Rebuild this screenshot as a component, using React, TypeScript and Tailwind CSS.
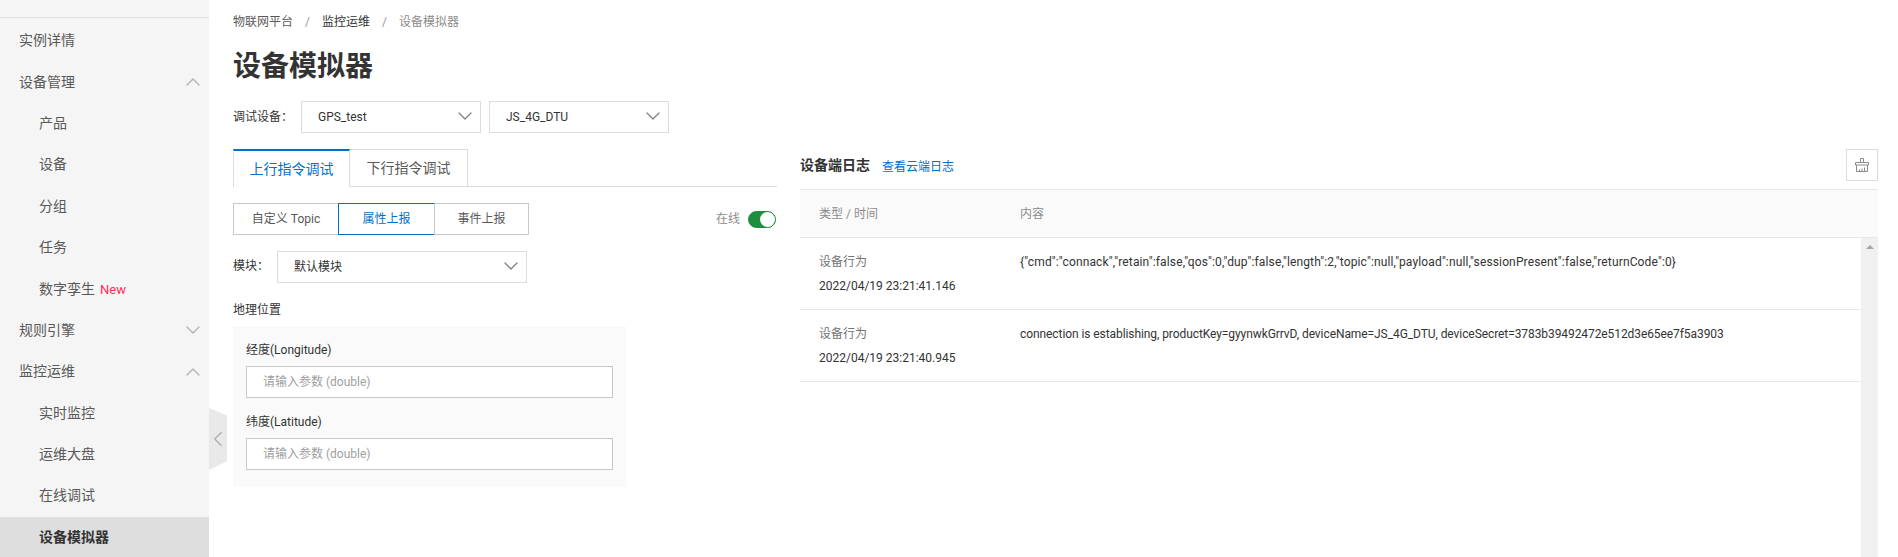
import React from "react";
import { ChevronDown, ChevronUp, ChevronLeft } from "lucide-react";

const font = "font-['Roboto','Noto_Sans_CJK_SC',sans-serif]";

function NavItem({ label, sub, open, active, badge }: { label: string; sub?: boolean; open?: boolean | null; active?: boolean; badge?: string }) {
  return (
    <div className={`flex h-[41.4px] shrink-0 items-center justify-between pr-[4px] text-[14px] ${sub ? "pl-[39px]" : "pl-[19px]"} ${active ? "bg-[#dedede] font-bold text-[#333333]" : "text-[#595959]"}`}>
      <span>
        {label}
        {badge && <span className="ml-[5px] text-[13px] text-[#ff2d55]">{badge}</span>}
      </span>
      {open === true && <ChevronUp className="h-6 w-6 text-[#b3b3b3]" strokeWidth={1.4} />}
      {open === false && <ChevronDown className="h-6 w-6 text-[#b3b3b3]" strokeWidth={1.4} />}
    </div>
  );
}

function Select({ value, className }: { value: string; className: string }) {
  return (
    <div className={`flex h-[32px] items-center justify-between border border-[#dcdcdc] bg-white pl-[16px] pr-[3px] text-[12px] text-[#333333] ${className}`}>
      <span>{value}</span>
      <ChevronDown className="h-6 w-6 -translate-y-[1px] text-[#808080]" strokeWidth={1.3} />
    </div>
  );
}

function Field({ label }: { label: string }) {
  return (
    <div>
      <div className="mb-[7px] h-[17px] text-[12px] leading-[17px] text-[#333333]">{label}</div>
      <div className="flex h-[32px] items-center border border-[#c8c8c8] bg-white pl-[16px] text-[12px] text-[#a0a0a0]">请输入参数 (double)</div>
    </div>
  );
}

function LogRow({ time, content, contentClass }: { time: string; content: string; contentClass: string }) {
  return (
    <div className="flex h-[72px] border-b border-[#e8e8e8] pt-[12px] text-[12px] leading-[24px]">
      <div className="w-[220px] pl-[19px]">
        <div className="text-[#737373]">设备行为</div>
        <div className="text-[#333333]">{time}</div>
      </div>
      <div className={`text-[#333333] ${contentClass}`}>{content}</div>
    </div>
  );
}

export default function App() {
  return (
    <div className={`relative flex h-[557px] overflow-hidden bg-white ${font}`}>
      <aside className="flex w-[209px] shrink-0 flex-col bg-[#f5f5f5] pt-[17px]">
        <div className="mb-[2px] border-t border-[#e0e0e0]" />
        <NavItem label="实例详情" />
        <NavItem label="设备管理" open={true} />
        <NavItem label="产品" sub />
        <NavItem label="设备" sub />
        <NavItem label="分组" sub />
        <NavItem label="任务" sub />
        <NavItem label="数字孪生" sub badge="New" />
        <NavItem label="规则引擎" open={false} />
        <NavItem label="监控运维" open={true} />
        <NavItem label="实时监控" sub />
        <NavItem label="运维大盘" sub />
        <NavItem label="在线调试" sub />
        <NavItem label="设备模拟器" sub active />
      </aside>

      <div className="absolute left-[209px] top-[408px] flex h-[62px] w-[18px] items-center justify-center bg-[#e9e9e9] [clip-path:polygon(0_0,100%_7.5px,100%_53.5px,0_100%)]">
        <ChevronLeft className="h-[26px] w-[26px] shrink-0 text-[#b0b0b0]" strokeWidth={1.3} />
      </div>

      <main className="flex min-w-0 flex-1 flex-col pl-[24px] pr-[20px]">
        <nav className="mt-[14px] flex h-[17px] items-center text-[12px] leading-[17px] text-[#555555]">
          <span className="text-[#595959]">物联网平台</span>
          <span className="mx-[12px] text-[#999999]">/</span>
          <span className="text-[#333333]">监控运维</span>
          <span className="mx-[12px] text-[#999999]">/</span>
          <span className="text-[#8c8c8c]">设备模拟器</span>
        </nav>
        <h1 className="mt-[18px] h-[36px] text-[28px] font-bold leading-[36px] text-[#333333]">设备模拟器</h1>
        <div className="mt-[16px] flex items-center">
          <span className="w-[68px] text-[12px] text-[#333333]">调试设备：</span>
          <Select value="GPS_test" className="w-[180px]" />
          <Select value="JS_4G_DTU" className="ml-[8px] w-[180px]" />
        </div>

        <div className="mt-[16px] flex gap-[23px]">
          <section className="w-[544px] shrink-0">
            <div className="flex h-[38px] border-b border-[#dcdcdc] text-[14px]">
              <div className="relative flex h-[38px] w-[117px] items-center justify-center border-r border-l border-t-2 border-[#dcdcdc] border-t-[#0070cc] bg-white text-[#0070cc]">上行指令调试</div>
              <div className="flex h-[37px] w-[118px] items-center justify-center border-r border-t border-[#dcdcdc] text-[#595959]">下行指令调试</div>
            </div>
            <div className="mt-[16px] flex items-center justify-between">
              <div className="flex h-[32px] text-[12px]">
                <div className="flex w-[106px] items-center justify-center border border-[#c8c8c8] text-[#595959]">自定义 Topic</div>
                <div className="-ml-px flex w-[97px] items-center justify-center border border-[#0070cc] text-[#0070cc]">属性上报</div>
                <div className="-ml-px flex w-[95px] items-center justify-center border border-[#c8c8c8] text-[#595959]">事件上报</div>
              </div>
              <div className="flex items-center pr-[1px]">
                <span className="text-[12px] text-[#8c8c8c]">在线</span>
                <span className="ml-[8px] flex h-[17px] w-[28px] items-center justify-end rounded-full border border-[#1e8e3e] bg-[#1e8e3e]">
                  <span className="h-[15px] w-[15px] rounded-full bg-white" />
                </span>
              </div>
            </div>
            <div className="mt-[16px] flex items-center">
              <span className="w-[44px] -translate-y-[1px] text-[12px] text-[#333333]">模块：</span>
              <Select value="默认模块" className="w-[250px]" />
            </div>
            <div className="mt-[19px] h-[17px] text-[12px] leading-[17px] text-[#333333]">地理位置</div>
            <div className="mt-[7px] flex w-[393px] flex-col gap-[16px] bg-[#fafafa] px-[13px] pb-[17px] pt-[16px]">
              <Field label="经度(Longitude)" />
              <Field label="纬度(Latitude)" />
            </div>
          </section>

          <section className="min-w-0 flex-1">
            <div className="flex h-[40px] items-start justify-between">
              <div className="mt-[6px] flex items-center">
                <span className="text-[14px] font-bold text-[#333333]">设备端日志</span>
                <span className="ml-[12px] translate-y-[1px] text-[12px] text-[#0070cc]">查看云端日志</span>
              </div>
              <div className="flex h-[32px] w-[32px] items-center justify-center border border-[#dcdcdc]">
                <svg width="16" height="16" viewBox="0 0 16 16" fill="none" stroke="#8a8a8a" strokeWidth="1">
                  <path d="M6.5 5.5V1.5h3v4" />
                  <path d="M1.5 5.5h13v2.5h-13z" />
                  <path d="M2.5 8v6.5h11V8" />
                  <path d="M5.5 14.5v-2M8 14.5v-3M10.5 14.5v-4" />
                </svg>
              </div>
            </div>
            <div className="flex h-[49px] items-center border-y border-[#e8e8e8] bg-[#fafafa] text-[12px] text-[#8c8c8c]">
              <div className="w-[220px] pl-[19px]">类型 / 时间</div>
              <div>内容</div>
            </div>
            <div className="relative h-[400px]">
              <LogRow time="2022/04/19 23:21:41.146" contentClass="tracking-[0.14px]" content={'{"cmd":"connack","retain":false,"qos":0,"dup":false,"length":2,"topic":null,"payload":null,"sessionPresent":false,"returnCode":0}'} />
              <LogRow time="2022/04/19 23:21:40.945" contentClass="tracking-[-0.08px]" content="connection is establishing, productKey=gyynwkGrrvD, deviceName=JS_4G_DTU, deviceSecret=3783b39492472e512d3e65ee7f5a3903" />
              <div className="absolute bottom-0 right-0 top-0 flex w-[17px] justify-center bg-[#f0f0f0] pt-[7px]">
                <span className="h-0 w-0 border-x-[4px] border-b-[4px] border-x-transparent border-b-[#a6a6a6]" />
              </div>
            </div>
          </section>
        </div>
      </main>
    </div>
  );
}
